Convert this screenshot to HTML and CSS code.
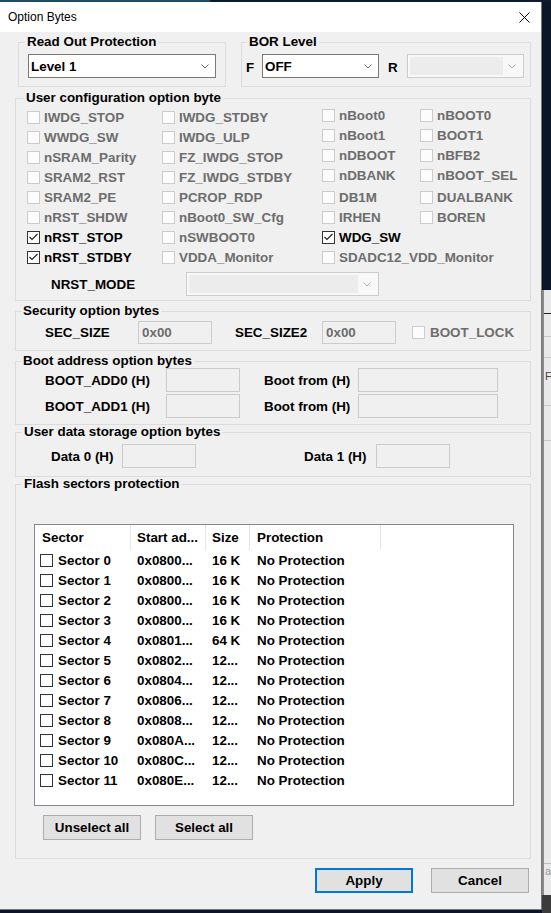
FILE: index.html
```html
<!DOCTYPE html>
<html>
<head>
<meta charset="utf-8">
<title>Option Bytes</title>
<link rel="stylesheet" href="styles.css">
</head>
<body>
<div class="topline"></div>
<div class="main">
  <div class="dialog">
    <div class="titlebar">
      <span class="title">Option Bytes</span>
      <svg class="close" width="11" height="11" viewBox="0 0 11 11"><path d="M0.5 0.5 L10.5 10.5 M10.5 0.5 L0.5 10.5" stroke="#000" stroke-width="1" fill="none"/></svg>
    </div>
    <div class="client">
      <div class="row1">
        <fieldset class="gb gb-rop">
          <legend class="lg-rop">Read Out Protection</legend>
          <div class="rop-body">
            <div class="combo combo-rop"><span class="combo-text">Level 1</span><svg class="chev" width="8" height="5" viewBox="0 0 8 5"><path d="M0.5 0.5 L4 4 L7.5 0.5" stroke="#6b6b6b" fill="none"/></svg></div>
          </div>
        </fieldset>
        <fieldset class="gb gb-bor">
          <legend class="lg-bor">BOR Level</legend>
          <div class="bor-body">
            <span class="lbl lbl-f">F</span>
            <div class="combo combo-f"><span class="combo-text">OFF</span><svg class="chev" width="8" height="5" viewBox="0 0 8 5"><path d="M0.5 0.5 L4 4 L7.5 0.5" stroke="#6b6b6b" fill="none"/></svg></div>
            <span class="lbl lbl-r">R</span>
            <div class="combo combo-dis combo-r"><span class="combo-field"></span><svg class="chev" width="8" height="5" viewBox="0 0 8 5"><path d="M0.5 0.5 L4 4 L7.5 0.5" stroke="#b0b0b0" fill="none"/></svg></div>
          </div>
        </fieldset>
      </div>

      <fieldset class="gb gb-user">
        <legend class="lg-user">User configuration option byte</legend>
        <div class="user-body">
          <div class="cbgrid">
            <label class="cb dis"><i class="box"></i>IWDG_STOP</label>
            <label class="cb dis"><i class="box"></i>IWDG_STDBY</label>
            <label class="cb dis up"><i class="box"></i>nBoot0</label>
            <label class="cb dis up"><i class="box"></i>nBOOT0</label>

            <label class="cb dis"><i class="box"></i>WWDG_SW</label>
            <label class="cb dis"><i class="box"></i>IWDG_ULP</label>
            <label class="cb dis up"><i class="box"></i>nBoot1</label>
            <label class="cb dis up"><i class="box"></i>BOOT1</label>

            <label class="cb dis"><i class="box"></i>nSRAM_Parity</label>
            <label class="cb dis"><i class="box"></i>FZ_IWDG_STOP</label>
            <label class="cb dis up"><i class="box"></i>nDBOOT</label>
            <label class="cb dis up"><i class="box"></i>nBFB2</label>

            <label class="cb dis"><i class="box"></i>SRAM2_RST</label>
            <label class="cb dis"><i class="box"></i>FZ_IWDG_STDBY</label>
            <label class="cb dis up"><i class="box"></i>nDBANK</label>
            <label class="cb dis up"><i class="box"></i>nBOOT_SEL</label>

            <label class="cb dis"><i class="box"></i>SRAM2_PE</label>
            <label class="cb dis"><i class="box"></i>PCROP_RDP</label>
            <label class="cb dis"><i class="box"></i>DB1M</label>
            <label class="cb dis"><i class="box"></i>DUALBANK</label>

            <label class="cb dis"><i class="box"></i>nRST_SHDW</label>
            <label class="cb dis"><i class="box"></i>nBoot0_SW_Cfg</label>
            <label class="cb dis"><i class="box"></i>IRHEN</label>
            <label class="cb dis"><i class="box"></i>BOREN</label>

            <label class="cb"><i class="box"><svg width="11" height="11" viewBox="0 0 11 11"><path d="M1.5 5 L4 7.5 L9.5 2" stroke="#222" stroke-width="1.2" fill="none"/></svg></i>nRST_STOP</label>
            <label class="cb dis"><i class="box"></i>nSWBOOT0</label>
            <label class="cb"><i class="box"><svg width="11" height="11" viewBox="0 0 11 11"><path d="M1.5 5 L4 7.5 L9.5 2" stroke="#222" stroke-width="1.2" fill="none"/></svg></i>WDG_SW</label>
            <span></span>

            <label class="cb"><i class="box"><svg width="11" height="11" viewBox="0 0 11 11"><path d="M1.5 5 L4 7.5 L9.5 2" stroke="#222" stroke-width="1.2" fill="none"/></svg></i>nRST_STDBY</label>
            <label class="cb dis"><i class="box"></i>VDDA_Monitor</label>
            <label class="cb dis"><i class="box"></i>SDADC12_VDD_Monitor</label>
            <span></span>
          </div>
          <div class="nrst-row">
            <span class="lbl nrst-lbl">NRST_MODE</span>
            <div class="combo combo-dis combo-nrst"><span class="combo-field"></span><svg class="chev" width="8" height="5" viewBox="0 0 8 5"><path d="M0.5 0.5 L4 4 L7.5 0.5" stroke="#b0b0b0" fill="none"/></svg></div>
          </div>
        </div>
      </fieldset>

      <fieldset class="gb gb-sec">
        <legend class="lg-small">Security option bytes</legend>
        <div class="sec-body">
          <span class="lbl l-secsize">SEC_SIZE</span>
          <span class="tb">0x00</span>
          <span class="lbl l-secsize2">SEC_SIZE2</span>
          <span class="tb">0x00</span>
          <label class="cb dis bootlock"><i class="box"></i>BOOT_LOCK</label>
        </div>
      </fieldset>

      <fieldset class="gb gb-boot">
        <legend class="lg-small">Boot address option bytes</legend>
        <div class="boot-body">
          <div class="boot-row">
            <span class="lbl l-bootadd">BOOT_ADD0 (H)</span>
            <span class="tb tb-h24"></span>
            <span class="lbl l-bootfrom">Boot from (H)</span>
            <span class="tb tb-h24 tb-wide"></span>
          </div>
          <div class="boot-row">
            <span class="lbl l-bootadd">BOOT_ADD1 (H)</span>
            <span class="tb tb-h24"></span>
            <span class="lbl l-bootfrom">Boot from (H)</span>
            <span class="tb tb-h24 tb-wide"></span>
          </div>
        </div>
      </fieldset>

      <fieldset class="gb gb-data">
        <legend class="lg-small lg-data">User data storage option bytes</legend>
        <div class="data-body">
          <span class="lbl l-data0">Data 0 (H)</span>
          <span class="tb tb-h24"></span>
          <span class="lbl l-data1">Data 1 (H)</span>
          <span class="tb tb-h24"></span>
        </div>
      </fieldset>

      <fieldset class="gb gb-flash">
        <legend class="lg-small lg-data">Flash sectors protection</legend>
        <div class="flash-body">
          <div class="list">
            <div class="lrow lhead">
              <span class="c1 h">Sector</span>
              <span class="c2 h">Start ad...</span>
              <span class="c3 h">Size</span>
              <span class="c4 h">Protection</span>
              <span class="c5"></span>
            </div>
            <div class="lrow"><span class="c1"><i class="box"></i>Sector 0</span><span class="c2">0x0800...</span><span class="c3">16 K</span><span class="c4">No Protection</span></div>
            <div class="lrow"><span class="c1"><i class="box"></i>Sector 1</span><span class="c2">0x0800...</span><span class="c3">16 K</span><span class="c4">No Protection</span></div>
            <div class="lrow"><span class="c1"><i class="box"></i>Sector 2</span><span class="c2">0x0800...</span><span class="c3">16 K</span><span class="c4">No Protection</span></div>
            <div class="lrow"><span class="c1"><i class="box"></i>Sector 3</span><span class="c2">0x0800...</span><span class="c3">16 K</span><span class="c4">No Protection</span></div>
            <div class="lrow"><span class="c1"><i class="box"></i>Sector 4</span><span class="c2">0x0801...</span><span class="c3">64 K</span><span class="c4">No Protection</span></div>
            <div class="lrow"><span class="c1"><i class="box"></i>Sector 5</span><span class="c2">0x0802...</span><span class="c3">12...</span><span class="c4">No Protection</span></div>
            <div class="lrow"><span class="c1"><i class="box"></i>Sector 6</span><span class="c2">0x0804...</span><span class="c3">12...</span><span class="c4">No Protection</span></div>
            <div class="lrow"><span class="c1"><i class="box"></i>Sector 7</span><span class="c2">0x0806...</span><span class="c3">12...</span><span class="c4">No Protection</span></div>
            <div class="lrow"><span class="c1"><i class="box"></i>Sector 8</span><span class="c2">0x0808...</span><span class="c3">12...</span><span class="c4">No Protection</span></div>
            <div class="lrow"><span class="c1"><i class="box"></i>Sector 9</span><span class="c2">0x080A...</span><span class="c3">12...</span><span class="c4">No Protection</span></div>
            <div class="lrow"><span class="c1"><i class="box"></i>Sector 10</span><span class="c2">0x080C...</span><span class="c3">12...</span><span class="c4">No Protection</span></div>
            <div class="lrow"><span class="c1"><i class="box"></i>Sector 11</span><span class="c2">0x080E...</span><span class="c3">12...</span><span class="c4">No Protection</span></div>
          </div>
          <div class="sel-row">
            <button class="btn btn-unsel">Unselect all</button>
            <button class="btn btn-sel">Select all</button>
          </div>
        </div>
      </fieldset>

      <div class="footer">
        <button class="btn btn-apply">Apply</button>
        <button class="btn btn-cancel">Cancel</button>
      </div>
    </div>
  </div>
  <div class="behind">
    <div class="behind-dark"></div>
    <div class="behind-win">
      <span class="behind-f4">F4</span>
      <span class="behind-ar">ar</span>
    </div>
    <div class="behind-bottom"></div>
  </div>
</div>
</body>
</html>
```

FILE: styles.css
```css
* { box-sizing: border-box; }
html, body { margin: 0; padding: 0; }
body {
  width: 551px; height: 913px; overflow: hidden;
  background: #0b1628;
  font-family: "Liberation Sans", Arial, sans-serif;
  font-size: 13.4px; font-weight: bold; color: #000;
}
.topline { height: 2px; background: linear-gradient(to right, #204b63 0 210px, #0c1a2b 210px); }
.main { display: flex; height: 911px; }

.dialog {
  width: 542px; height: 908px; flex: none;
  display: flex; flex-direction: column;
  background: #f0f0f0;
  border-right: 1px solid #777;
  border-bottom: 1px solid #777;
}
.titlebar {
  height: 30px; flex: none; background: #fff;
  display: flex; align-items: center; padding-left: 8px;
}
.title { font-size: 12px; font-weight: normal; }
.close { margin-left: auto; margin-right: 11px; }

.client { display: flex; flex-direction: column; padding-top: 3px; }

.gb { margin: 0; padding: 0; border: 1px solid #dcdcdc; min-width: 0; }
.gb > legend { padding: 0 2px; line-height: 14px; height: 14px; font-size: 13.4px; font-weight: bold; }

.row1 { display: flex; }
.gb-rop { margin-left: 18px; width: 208px; }
.lg-rop { margin-left: 6px; }
.rop-body { padding: 5px 0 8px 9px; }
.gb-bor { margin-left: 15px; width: 290px; }
.lg-bor { margin-left: 5px; }
.bor-body { display: flex; align-items: center; padding: 5px 0 8px 4px; }
.lbl-f { width: 16px; padding-top: 3px; }
.lbl-r { margin-left: 9px; width: 19px; padding-top: 3px; }

.combo {
  height: 24px; background: #fff; border: 1px solid #7a7a7a;
  display: flex; align-items: center; padding-left: 2px;
}
.combo-text { flex: 1; }
.chev { margin-right: 6px; margin-left: auto; flex: none; }
.combo-rop { width: 188px; }
.combo-f { width: 117px; }
.combo-dis { border-color: #cccccc; background: #f8f8f8; padding: 2px; }
.combo-field { flex: 1; align-self: stretch; background: #ececec; margin-right: 5px; }
.combo-dis .chev { margin-right: 5px; }
.combo-r { width: 117px; }

.gb-user { margin: 4px 0 0 15px; width: 516px; }
.lg-user { margin-left: 8px; }
.user-body { padding: 2px 0 4px 11px; }
.cbgrid { display: grid; grid-template-columns: 135px 160px 98px 1fr; grid-auto-rows: 20px; }
.cb { display: flex; align-items: center; gap: 4px; white-space: nowrap; height: 20px; }
.cb.up { margin-top: -2px; }
.box {
  width: 13px; height: 13px; flex: none; border: 1px solid #333; background: #fff;
  display: inline-flex; align-items: center; justify-content: center;
}
.dis { color: #6d6d6d; }
.dis .box { border-color: #cccccc; background: #fcfcfc; }

.nrst-row { display: flex; align-items: center; margin-top: 5px; height: 24px; }
.nrst-lbl { margin-left: 24px; width: 135px; }
.combo-nrst { width: 193px; }

.gb-sec { margin: 3px 0 0 15px; width: 516px; }
.lg-small { margin-left: 5px; }
.sec-body { display: flex; align-items: center; padding: 3px 0 6px 29px; }
.l-secsize { width: 93px; }
.l-secsize2 { margin-left: 23px; width: 87px; }
.tb {
  width: 74px; height: 23px; flex: none;
  border: 1px solid #cccccc; background: #f0f0f0; color: #6d6d6d;
  padding-left: 3px; line-height: 21px;
}
.tb-h24 { height: 24px; }
.tb-wide { width: 140px; }
.bootlock { margin-left: 16px; gap: 5px; }

.gb-boot { margin: 3px 0 0 15px; width: 516px; }
.boot-body { display: flex; flex-direction: column; gap: 2px; padding: 0 0 6px 29px; }
.boot-row { display: flex; align-items: center; }
.l-bootadd { width: 121px; }
.l-bootfrom { margin-left: 24px; width: 94px; }

.gb-data { margin: 0 0 0 15px; width: 516px; }
.lg-data { margin-left: 6px; }
.data-body { display: flex; align-items: center; padding: 5px 0 8px 35px; }
.l-data0 { width: 71px; }
.l-data1 { margin-left: 108px; width: 72px; }

.gb-flash { margin: 0 0 0 15px; width: 516px; }
.flash-body { padding: 33px 0 18px 18px; }
.list { width: 480px; height: 282px; background: #fff; border: 1px solid #828790; }
.lrow { display: grid; grid-template-columns: 96px 75px 44px 131px 1fr; height: 20px; align-items: center; white-space: nowrap; }
.lhead { height: 25px; align-items: stretch; }
.lhead .h, .lhead .c5 { display: flex; align-items: center; }
.lhead .h { border-right: 1px solid #e5e5e5; }
.c1 { padding-left: 5px; display: flex; align-items: center; gap: 5px; }
.lhead .c1 { padding-left: 7px; }
.c2 { padding-left: 6px; }
.c3 { padding-left: 6px; }
.c4 { padding-left: 7px; }
.c1 .box { border-color: #333; }

.sel-row { display: flex; gap: 14px; margin: 9px 0 0 9px; }
.btn {
  width: 98px; height: 25px; padding: 0;
  background: #e1e1e1; border: 1px solid #adadad;
  font-family: "Liberation Sans", Arial, sans-serif; font-size: 13.4px; font-weight: bold; color: #000;
}
.footer { display: flex; margin-top: 9px; padding-left: 315px; gap: 18px; }
.btn-apply { border: 2px solid #0078d7; }

.behind { flex: 1; display: flex; flex-direction: column; }
.behind-dark { height: 288px; background: #0b1628; }
.behind-win {
  flex: 1;
  background-color: #e9e9e9;
  border-left: 2px solid #8a8a8a;
  background-image:
    linear-gradient(to bottom, transparent 23px, #222 23px 24px, transparent 24px 46px, #c8c8c8 46px 47px, transparent 47px 67px, #c8c8c8 67px 68px, transparent 68px 115px, #c8c8c8 115px 116px, transparent 116px 150px, #c8c8c8 150px 151px, transparent 151px 573px, #bdbdbd 573px 574px, transparent 574px);
  overflow: hidden;
}
.behind-f4 { display: block; margin-top: 80px; margin-left: 1px; font-size: 11px; font-weight: normal; color: #444; white-space: nowrap; }
.behind-ar { display: block; margin-top: 483px; margin-left: 1px; font-size: 11px; font-weight: normal; color: #999; white-space: nowrap; }
.behind-bottom { height: 18px; background: #3b3b3b; }
```
